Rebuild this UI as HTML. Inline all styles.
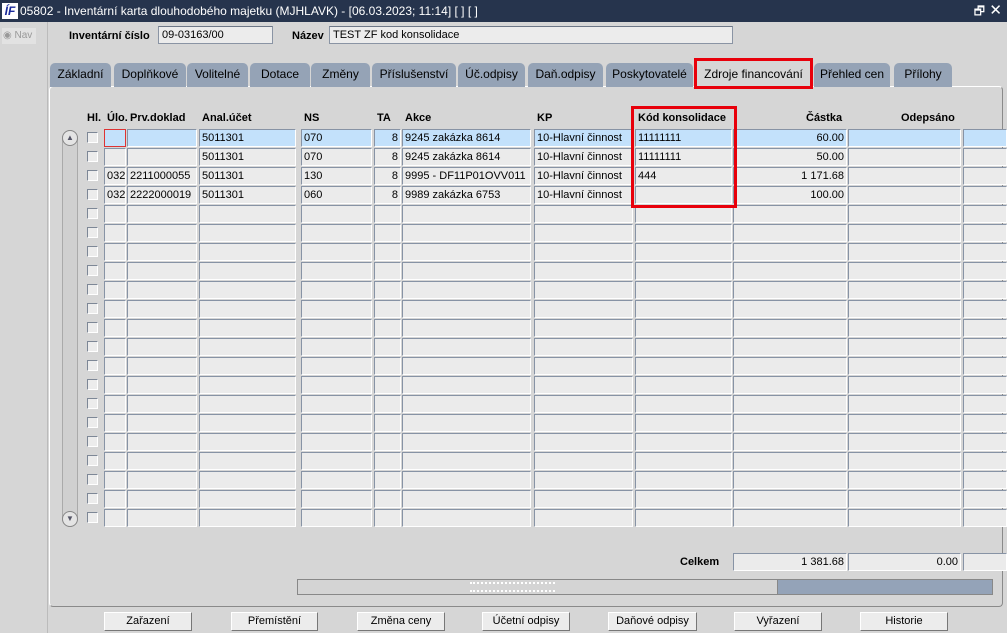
<!DOCTYPE html><html><head><meta charset="utf-8"><style>
*{margin:0;padding:0;box-sizing:border-box}
body{width:1007px;height:633px;overflow:hidden;background:#d6d6d6;font-family:"Liberation Sans",Arial,sans-serif;font-size:12px;color:#000;position:relative}
.a{position:absolute}
.title{left:0;top:0;width:1007px;height:22px;background:#26344d;color:#fff;font-size:12px;line-height:22px;padding-left:20px}
.logo{left:2px;top:3px;width:16px;height:16px;background:#fff;color:#1a2a9a;font-weight:bold;font-style:italic;font-size:12px;line-height:16px;text-align:center}
.nav{left:0;top:22px;width:48px;height:611px;background:#d6d6d6;border-right:1px solid #bbb}
.lbl{font-weight:bold;font-size:11px}
.inp{background:#ececec;border:1px solid #8a94a4;border-top-color:#6c7686;height:18px;line-height:16px;padding-left:3px;font-size:11px}
.tab{top:63px;height:24px;background:#95a3b6;border-radius:5px 5px 0 0;text-align:center;line-height:23px;font-size:12px}
.panel{left:49px;top:86px;width:954px;height:521px;border:1px solid #fff;border-right-color:#8a8a8a;border-bottom-color:#8a8a8a;border-radius:4px;background:#d6d6d6}
.h{top:112px;font-weight:bold;font-size:11px}
.c{height:18px;background:#ebebeb;border:1px solid #fff;border-top-color:#8793a5;border-left-color:#8793a5;font-size:11px;line-height:16px;padding:0 2px;white-space:nowrap;overflow:hidden}
.sel{background:#c3e1fb}
.cb{width:11px;height:11px;background:#ececec;border:1px solid #7d8796;border-right-color:#fff;border-bottom-color:#fff}
.btn{top:612px;height:19px;background:#ececec;border:1px solid #fff;border-right-color:#777;border-bottom-color:#777;text-align:center;font-size:11px;line-height:17px}
.red{border:3px solid #e8000b}
</style></head><body>
<div class="a title">05802 - Inventární karta dlouhodobého majetku (MJHLAVK) - [06.03.2023; 11:14] [ ] [ ]</div>
<div class="a logo">ÍF</div>
<div class="a" style="right:22px;top:2px;color:#fff;font-size:12px">🗗</div>
<div class="a" style="right:5px;top:1px;color:#fff;font-size:15px">✕</div>
<div class="a nav"></div>
<div class="a" style="left:2px;top:28px;width:34px;height:16px;background:#e2e2e2;color:#999;font-size:10px;line-height:16px;padding-left:1px;white-space:nowrap">◉ Nav</div>
<div class="a lbl" style="left:69px;top:30px">Inventární číslo</div>
<div class="a inp" style="left:158px;top:26px;width:115px">09-03163/00</div>
<div class="a lbl" style="left:292px;top:30px">Název</div>
<div class="a inp" style="left:329px;top:26px;width:404px">TEST ZF kod konsolidace</div>

<div class="a panel"></div>
<div class="a tab" style="left:50px;width:61px">Základní</div>
<div class="a tab" style="left:114px;width:72px">Doplňkové</div>
<div class="a tab" style="left:187px;width:61px">Volitelné</div>
<div class="a tab" style="left:250px;width:60px">Dotace</div>
<div class="a tab" style="left:311px;width:59px">Změny</div>
<div class="a tab" style="left:372px;width:84px">Příslušenství</div>
<div class="a tab" style="left:458px;width:67px">Úč.odpisy</div>
<div class="a tab" style="left:528px;width:75px">Daň.odpisy</div>
<div class="a tab" style="left:606px;width:87px">Poskytovatelé</div>
<div class="a tab" style="left:696px;width:115px;top:60px;height:27px;background:#d6d6d6;line-height:28px">Zdroje financování</div>
<div class="a red" style="left:694px;top:58px;width:119px;height:31px"></div>
<div class="a tab" style="left:814px;width:76px">Přehled cen</div>
<div class="a tab" style="left:894px;width:58px">Přílohy</div>

<div class="a h" style="left:87px">Hl.</div>
<div class="a h" style="left:107px">Úlo.</div>
<div class="a h" style="left:130px">Prv.doklad</div>
<div class="a h" style="left:202px">Anal.účet</div>
<div class="a h" style="left:304px">NS</div>
<div class="a h" style="left:377px">TA</div>
<div class="a h" style="left:405px">Akce</div>
<div class="a h" style="left:537px">KP</div>
<div class="a h" style="left:638px">Kód konsolidace</div>
<div class="a h" style="left:806px">Částka</div>
<div class="a h" style="left:901px">Odepsáno</div>

<div class="a" style="left:62px;top:130px;width:16px;height:397px;background:#d0d0d0;border:1px solid #aaa;border-radius:8px"></div>
<div class="a" style="left:62px;top:130px;width:16px;height:16px;background:#e4e4e4;border:1px solid #888;border-radius:8px;font-size:8px;text-align:center;line-height:14px;color:#556">▲</div>
<div class="a" style="left:62px;top:511px;width:16px;height:16px;background:#e4e4e4;border:1px solid #888;border-radius:8px;font-size:8px;text-align:center;line-height:14px;color:#556">▼</div>

<div id="grid"></div>
<script>
var cols=[[104,22],[127,70],[199,97],[301,71],[374,27],[402,129],[534,99],[635,97],[733,114],[848,113],[963,44]];
var data=[["","","5011301","070","8","9245 zakázka 8614","10-Hlavní činnost","11111111","60.00",""],
["","","5011301","070","8","9245 zakázka 8614","10-Hlavní činnost","11111111","50.00",""],
["032","2211000055","5011301","130","8","9995 -  DF11P01OVV011","10-Hlavní činnost","444","1 171.68",""],
["032","2222000019","5011301","060","8","9989 zakázka 6753","10-Hlavní činnost","","100.00",""]];
var h="";
for(var r=0;r<21;r++){var y=129+r*19;
h+='<div class="a cb" style="left:87px;top:'+(y+3)+'px"></div>';
for(var c=0;c<cols.length;c++){var t=(data[r]&&data[r][c])||"";var al=(c==4||c==8||c==9)?"text-align:right;":"";
var cl="a c"+(r==0&&c!=0?" sel":"");
h+='<div class="'+cl+'" style="left:'+cols[c][0]+'px;top:'+y+'px;width:'+cols[c][1]+'px;'+al+(r==0&&c==0?'border:1px solid #d33;background:#c3e1fb;':'')+'">'+t+'</div>';}}
document.getElementById("grid").innerHTML=h;
</script>
<div class="a red" style="left:631px;top:106px;width:106px;height:102px"></div>

<div class="a lbl" style="left:680px;top:556px;font-size:11px">Celkem</div>
<div class="a c" style="left:733px;top:553px;width:114px;text-align:right">1 381.68</div>
<div class="a c" style="left:848px;top:553px;width:113px;text-align:right">0.00</div>
<div class="a c" style="left:963px;top:553px;width:44px"></div>

<div class="a" style="left:297px;top:579px;width:696px;height:16px;background:#94a3b8;border:1px solid #888"></div>
<div class="a" style="left:298px;top:580px;width:480px;height:14px;background:#d4d4d4;border-right:1px solid #888"></div>
<div class="a" style="left:470px;top:582px;width:85px;height:10px;border-top:2px dotted #fff;border-bottom:2px dotted #fff"></div>

<div class="a btn" style="left:104px;width:88px">Zařazení</div>
<div class="a btn" style="left:231px;width:87px">Přemístění</div>
<div class="a btn" style="left:357px;width:88px">Změna ceny</div>
<div class="a btn" style="left:482px;width:88px">Účetní odpisy</div>
<div class="a btn" style="left:608px;width:89px">Daňové odpisy</div>
<div class="a btn" style="left:734px;width:88px">Vyřazení</div>
<div class="a btn" style="left:860px;width:88px">Historie</div>
</body></html>
